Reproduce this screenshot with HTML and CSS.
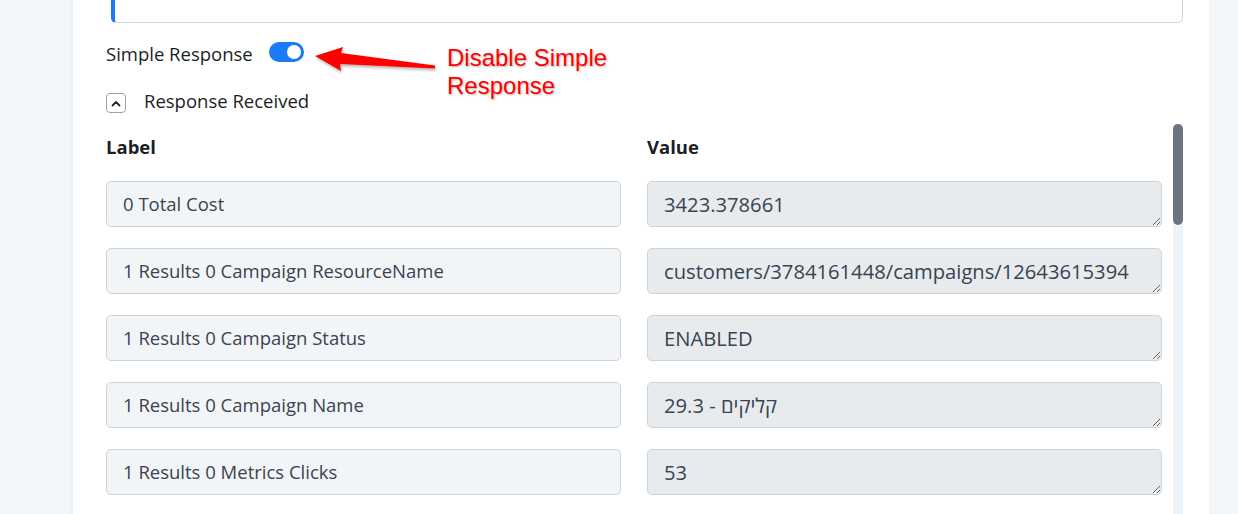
FILE: index.html
```html
<!DOCTYPE html>
<html lang="en">
<head>
    <meta charset="UTF-8">
    <meta name="viewport" content="width=device-width, initial-scale=1.0">
    <title>Response Settings</title>
    <link rel="stylesheet" href="styles.css">
</head>
<body>
    <div class="page">
        <div class="card">
            <!-- end of the request body box -->
            <div class="body-box"></div>

            <div class="option-row">
                <span class="option-label">Simple Response</span>
                <span class="switch on"><span class="knob"></span></span>
            </div>

            <div class="section-head">
                <button class="collapse-btn" type="button">
                    <svg width="10" height="7" viewBox="0 0 10 7">
                        <path d="M1.5 5.5 L5 2 L8.5 5.5" fill="none" stroke="#1f2933" stroke-width="1.8" stroke-linecap="round" stroke-linejoin="round"/>
                    </svg>
                </button>
                <span class="section-title">Response Received</span>
            </div>

            <div class="response-area">
                <div class="response-list">
                    <div class="grid">
                        <div class="col-head">Label</div>
                        <div class="col-head">Value</div>

                        <div class="field label-field">0 Total Cost</div>
                        <textarea class="field value-field" readonly>3423.378661</textarea>

                        <div class="field label-field">1 Results 0 Campaign ResourceName</div>
                        <textarea class="field value-field" readonly>customers/3784161448/campaigns/12643615394</textarea>

                        <div class="field label-field">1 Results 0 Campaign Status</div>
                        <textarea class="field value-field" readonly>ENABLED</textarea>

                        <div class="field label-field">1 Results 0 Campaign Name</div>
                        <textarea class="field value-field" readonly>קליקים - 29.3</textarea>

                        <div class="field label-field">1 Results 0 Metrics Clicks</div>
                        <textarea class="field value-field" readonly>53</textarea>
                    </div>
                </div>
                <!-- scrollbar of the response list -->
                <div class="scroll-track"><div class="scroll-thumb"></div></div>
            </div>
        </div>
    </div>

    <!-- callout pointing at the switch -->
    <div class="callout">
        <svg class="callout-arrow" width="130" height="34" viewBox="310 42 130 34">
            <defs>
                <filter id="soft" x="-10%" y="-40%" width="120%" height="180%">
                    <feDropShadow dx="1" dy="2" stdDeviation="1.5" flood-color="#000" flood-opacity="0.3"/>
                </filter>
            </defs>
            <polygon points="315,56 343,47 341,53 435,65.5 435,68.5 340,64 341,71" fill="#ff0000" filter="url(#soft)"/>
        </svg>
        <div class="callout-text">Disable Simple<br>Response</div>
    </div>
</body>
</html>
```

FILE: styles.css
```css
body {
    margin: 0;
    padding: 0;
    height: 514px;
    overflow: hidden;
    font-family: 'Open Sans', 'Noto Sans', sans-serif;
    color: #1b1f24;
    background: #f3f6f9;
}

.page {
    display: flex;
    height: 514px;
    padding: 0 29px 0 73px;
}

.card {
    flex: 1;
    background: white;
    box-shadow: -2px 0 4px rgba(0, 0, 0, 0.04);
    padding: 0 26px 0 33px;
    display: flex;
    flex-direction: column;
    min-width: 0;
}

.body-box {
    height: 22px;
    margin-left: 5px;
    border: 1px solid #cdd4dc;
    border-top: none;
    border-left: 4px solid #1a7cf5;
    border-radius: 0 0 5px 5px;
}

/* Simple Response switch */
.option-row {
    display: flex;
    align-items: center;
    height: 20px;
    margin-top: 19px;
}

.option-label {
    font-size: 18.5px;
    margin-right: 16px;
    margin-top: 2px;
}

.switch {
    width: 35px;
    height: 20px;
    border-radius: 10px;
    background: #c4ccd5;
    position: relative;
    display: inline-block;
}

.switch.on {
    background: #1a7cf5;
}

.switch .knob {
    position: absolute;
    top: 3px;
    left: 3px;
    width: 14px;
    height: 14px;
    border-radius: 50%;
    background: white;
}

.switch.on .knob {
    left: 18px;
}

/* collapsible section */
.section-head {
    display: flex;
    align-items: center;
    margin-top: 31px;
    height: 20px;
}

.collapse-btn {
    width: 20px;
    height: 20px;
    padding: 0;
    border: 1px solid #9ba4ae;
    border-radius: 4px;
    background: white;
    display: flex;
    align-items: center;
    justify-content: center;
    margin-right: 18px;
}

.section-title {
    font-size: 18.5px;
    margin-top: -6px;
}

.response-area {
    margin-top: 11px;
    flex: 1;
    min-height: 0;
    display: flex;
    overflow: hidden;
}

.response-list {
    flex: 1;
    min-width: 0;
    overflow: hidden;
}

.scroll-track {
    width: 10px;
    margin-left: 11px;
    background: #edf4fc;
}

.scroll-thumb {
    height: 101px;
    border-radius: 5px;
    background: #6c757f;
}

.grid {
    display: grid;
    grid-template-columns: 515px 515px;
    column-gap: 26px;
    row-gap: 21px;
}

.col-head {
    box-sizing: border-box;
    height: 36px;
    padding-top: 10px;
    font-size: 18.5px;
    font-weight: bold;
}

.field {
    box-sizing: border-box;
    height: 46px;
    margin: 0;
    border: 1px solid #cdd3da;
    border-radius: 5px;
    padding: 0 16px;
    font-size: 18.5px;
    color: #3a4350;
}

.label-field {
    background: #f2f5f8;
    display: flex;
    align-items: center;
    padding-bottom: 2px;
}

.value-field {
    background: #e8ebee;
    font-family: 'Open Sans', sans-serif;
    font-size: 20.2px;
    padding-top: 8px;
    resize: vertical;
    outline: none;
    overflow: hidden;
    white-space: nowrap;
}

/* annotation */
.callout-arrow {
    position: absolute;
    left: 310px;
    top: 42px;
}

.callout-text {
    position: absolute;
    left: 447px;
    top: 44px;
    font-family: 'Liberation Sans', Arial, sans-serif;
    font-size: 24px;
    line-height: 28px;
    color: #ff0000;
    text-shadow: 1px 1px 2px rgba(0, 0, 0, 0.3);
}
```
